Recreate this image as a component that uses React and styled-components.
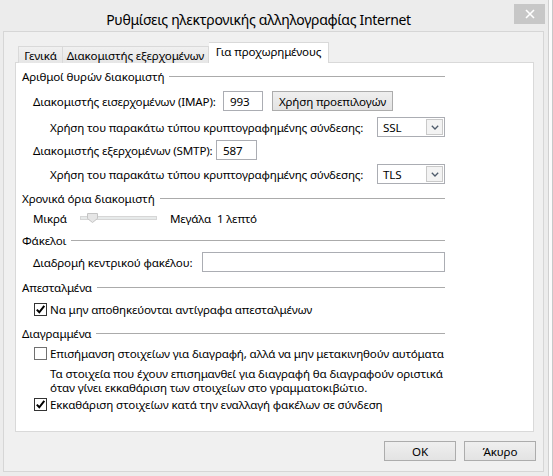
import React from "react";
import styled, { createGlobalStyle } from "styled-components";

const GlobalStyle = createGlobalStyle`
  html, body { margin: 0; padding: 0; }
  body {
    width: 553px; height: 476px; overflow: hidden; background: #fff;
    font-family: "Noto Sans", "Open Sans", sans-serif; font-size: 11.6px;
    letter-spacing: -0.16px; color: #000;
  }
  * { box-sizing: border-box; }
`;

const Screen = styled.div`
  display: flex; width: 553px; height: 476px;
`;

const Strip = styled.div`
  width: 5px; height: 476px; background: #fbfbfb;
  border-left: 1px solid #d0d0d0;
  border-right: 1px solid #c8c8c8;
`;

const Window = styled.div`
  width: 548px; height: 476px; background: #ececec;
  display: flex; flex-direction: column;
  padding: 0 4px 4px 3px;
`;

const TitleBar = styled.div`
  height: 31px; display: flex; align-items: flex-start; flex: none;
`;

const Title = styled.div`
  flex: 1; text-align: center; font-size: 14px; letter-spacing: -0.3px;
  line-height: 20px; padding-top: 10px; color: #000;
`;

const Close = styled.div`
  width: 31px; height: 20px; margin-top: 4px; margin-right: -1px;
  background: #c7c7c7; display: flex; align-items: center; justify-content: center;
`;

const Client = styled.div`
  flex: 1; background: #f0f0f0; border: 1px solid #d6d6d6;
  display: flex; flex-direction: column; padding: 10px 8px 0 11px;
`;

const TabRow = styled.div`
  height: 21px; display: flex; align-items: flex-end; padding-left: 3px; flex: none;
`;

const Tab = styled.div`
  width: ${(p) => p.$w}px;
  height: ${(p) => (p.$active ? 21 : 17)}px;
  display: flex; align-items: center; justify-content: center;
  background: ${(p) => (p.$active ? "#fff" : "linear-gradient(#f0f0f0, #e6e6e6)")};
  border: 1px solid #d9d9d9; border-bottom: none;
  border-left: ${(p) => (p.$noLeft ? "none" : "1px solid #d9d9d9")};
  padding-bottom: ${(p) => (p.$active ? 3 : 0)}px;
  position: relative; z-index: ${(p) => (p.$active ? 1 : 0)};
  white-space: nowrap;
`;

const Pane = styled.div`
  width: 519px; height: 370px; margin-top: -1px; background: #fff;
  border: 1px solid #d9d9d9; padding: 5px 0 0 6px; flex: none;
  display: flex; flex-direction: column;
`;

const Group = styled.div`
  width: 423px; display: flex; flex-direction: column;
  margin-top: ${(p) => p.$mt || 0}px;
`;

const GroupHead = styled.div`
  height: 16px; display: flex; align-items: center; gap: 5px; white-space: nowrap;
  &::after { content: ""; flex: 1; height: 1px; background: #ababab; margin-top: 1px; }
`;

const Row = styled.div`
  height: ${(p) => p.$h || 20}px; display: flex; align-items: center;
  margin-top: ${(p) => p.$mt || 0}px;
  padding-left: ${(p) => p.$indent || 0}px;
  white-space: nowrap;
`;

const Label = styled.span`
  width: ${(p) => (p.$w ? `${p.$w}px` : "auto")}; flex: none;
`;

const TextBox = styled.div`
  width: ${(p) => (p.$w ? `${p.$w}px` : "auto")};
  flex: ${(p) => (p.$grow ? 1 : "none")};
  height: 20px; border: 1px solid #abadb3; background: #fff;
  display: flex; align-items: center; padding-left: 6px;
`;

const PushButton = styled.div`
  width: ${(p) => p.$w}px; height: 20px; margin-left: ${(p) => p.$ml || 0}px;
  border: 1px solid #acacac; background: linear-gradient(#efefef, #e3e3e3);
  display: flex; align-items: center; justify-content: center; flex: none;
`;

const Select = styled.div`
  width: 68px; height: 20px; margin-left: auto; border: 1px solid #abadb3;
  background: #fff; display: flex; align-items: center; padding: 0 1px 0 5px;
  justify-content: space-between;
`;

const SelectArrow = styled.div`
  width: 17px; height: 16px; border: 1px solid #c9c9c9; background: #f3f3f3;
  display: flex; align-items: center; justify-content: center;
`;

const SliderTrack = styled.div`
  width: 77px; height: 4px; margin: 0 13px 0 13px; position: relative;
  background: #e7eaea; border: 1px solid #d6d6d6;
`;

const Thumb = styled.svg`
  position: absolute; left: 6px; top: -4px;
`;

const Box = styled.div`
  width: 13px; height: 13px; margin: 0 3px 0 1px; flex: none;
  border: 1px solid ${(p) => (p.$checked ? "#333" : "#707070")}; background: #fff;
  display: flex; align-items: center; justify-content: center;
`;

const Note = styled.div`
  margin-top: ${(p) => p.$mt || 0}px; padding-left: 28px; line-height: 14px;
  white-space: nowrap;
`;

const Footer = styled.div`
  display: flex; justify-content: flex-end; gap: 8px; margin: 9px -1px 0 0; flex: none;
`;

const Check = ({ checked, children, mt }) => (
  <Row $h={16} $mt={mt} $indent={11}>
    <Box $checked={checked}>
      {checked && (
        <svg width="11" height="11" viewBox="0 0 11 11">
          <path d="M1.8 5.6 L4.3 8.3 L9.3 1.8" fill="none" stroke="#000" strokeWidth="2" />
        </svg>
      )}
    </Box>
    {children}
  </Row>
);

const Arrow = () => (
  <SelectArrow>
    <svg width="8" height="5" viewBox="0 0 8 5">
      <path d="M0.8 0.8 L4 4 L7.2 0.8" fill="none" stroke="#4d5a6a" strokeWidth="1.3" />
    </svg>
  </SelectArrow>
);

export default function App() {
  return (
    <>
      <GlobalStyle />
      <Screen>
        <Window>
          <TitleBar>
            <Title>Ρυθμίσεις ηλεκτρονικής αλληλογραφίας Internet</Title>
            <Close>
              <svg width="10" height="10" viewBox="0 0 10 10">
                <path d="M1 1 L9 9 M9 1 L1 9" stroke="#fff" strokeWidth="1.6" />
              </svg>
            </Close>
          </TitleBar>
          <Client>
            <TabRow>
              <Tab $w={45}>Γενικά</Tab>
              <Tab $w={146} $noLeft>Διακομιστής εξερχομένων</Tab>
              <Tab $w={120} $active $noLeft>Για προχωρημένους</Tab>
            </TabRow>
            <Pane>
              <Group>
                <GroupHead>Αριθμοί θυρών διακομιστή</GroupHead>
                <Row $mt={7} $indent={11}>
                  <Label $w={190}>Διακομιστής εισερχομένων (IMAP):</Label>
                  <TextBox $w={40}>993</TextBox>
                  <PushButton $w={121} $ml={9}>Χρήση προεπιλογών</PushButton>
                </Row>
                <Row $mt={6} $indent={28}>
                  <Label>Χρήση του παρακάτω τύπου κρυπτογραφημένης σύνδεσης:</Label>
                  <Select>SSL<Arrow /></Select>
                </Row>
                <Row $mt={3} $indent={11}>
                  <Label $w={183}>Διακομιστής εξερχομένων (SMTP):</Label>
                  <TextBox $w={41}>587</TextBox>
                </Row>
                <Row $mt={4} $indent={28}>
                  <Label>Χρήση του παρακάτω τύπου κρυπτογραφημένης σύνδεσης:</Label>
                  <Select>TLS<Arrow /></Select>
                </Row>
              </Group>
              <Group $mt={6}>
                <GroupHead>Χρονικά όρια διακομιστή</GroupHead>
                <Row $mt={2} $indent={11}>
                  <Label>Μικρά</Label>
                  <SliderTrack>
                    <Thumb width="11" height="10" viewBox="0 0 11 10">
                      <path d="M0.5 0.5 H10.5 V5.5 L5.5 9.5 L0.5 5.5 Z" fill="#e6e6e6" stroke="#c4c4c4" />
                    </Thumb>
                  </SliderTrack>
                  <Label $w={47}>Μεγάλα</Label>
                  <Label>1 λεπτό</Label>
                </Row>
              </Group>
              <Group $mt={4}>
                <GroupHead>Φάκελοι</GroupHead>
                <Row $mt={4} $indent={11}>
                  <Label $w={169}>Διαδρομή κεντρικού φακέλου:</Label>
                  <TextBox $grow />
                </Row>
              </Group>
              <Group $mt={7}>
                <GroupHead>Απεσταλμένα</GroupHead>
                <Check checked mt={6}>Να μην αποθηκεύονται αντίγραφα απεσταλμένων</Check>
              </Group>
              <Group $mt={8}>
                <GroupHead>Διαγραμμένα</GroupHead>
                <Check mt={4}>Επισήμανση στοιχείων για διαγραφή, αλλά να μην μετακινηθούν αυτόματα</Check>
                <Note $mt={6}>
                  Τα στοιχεία που έχουν επισημανθεί για διαγραφή θα διαγραφούν οριστικά
                  <br />
                  όταν γίνει εκκαθάριση των στοιχείων στο γραμματοκιβώτιο.
                </Note>
                <Check checked mt={1}>Εκκαθάριση στοιχείων κατά την εναλλαγή φακέλων σε σύνδεση</Check>
              </Group>
            </Pane>
            <Footer>
              <PushButton $w={72}>OK</PushButton>
              <PushButton $w={72}>Άκυρο</PushButton>
            </Footer>
          </Client>
        </Window>
        <Strip />
      </Screen>
    </>
  );
}
